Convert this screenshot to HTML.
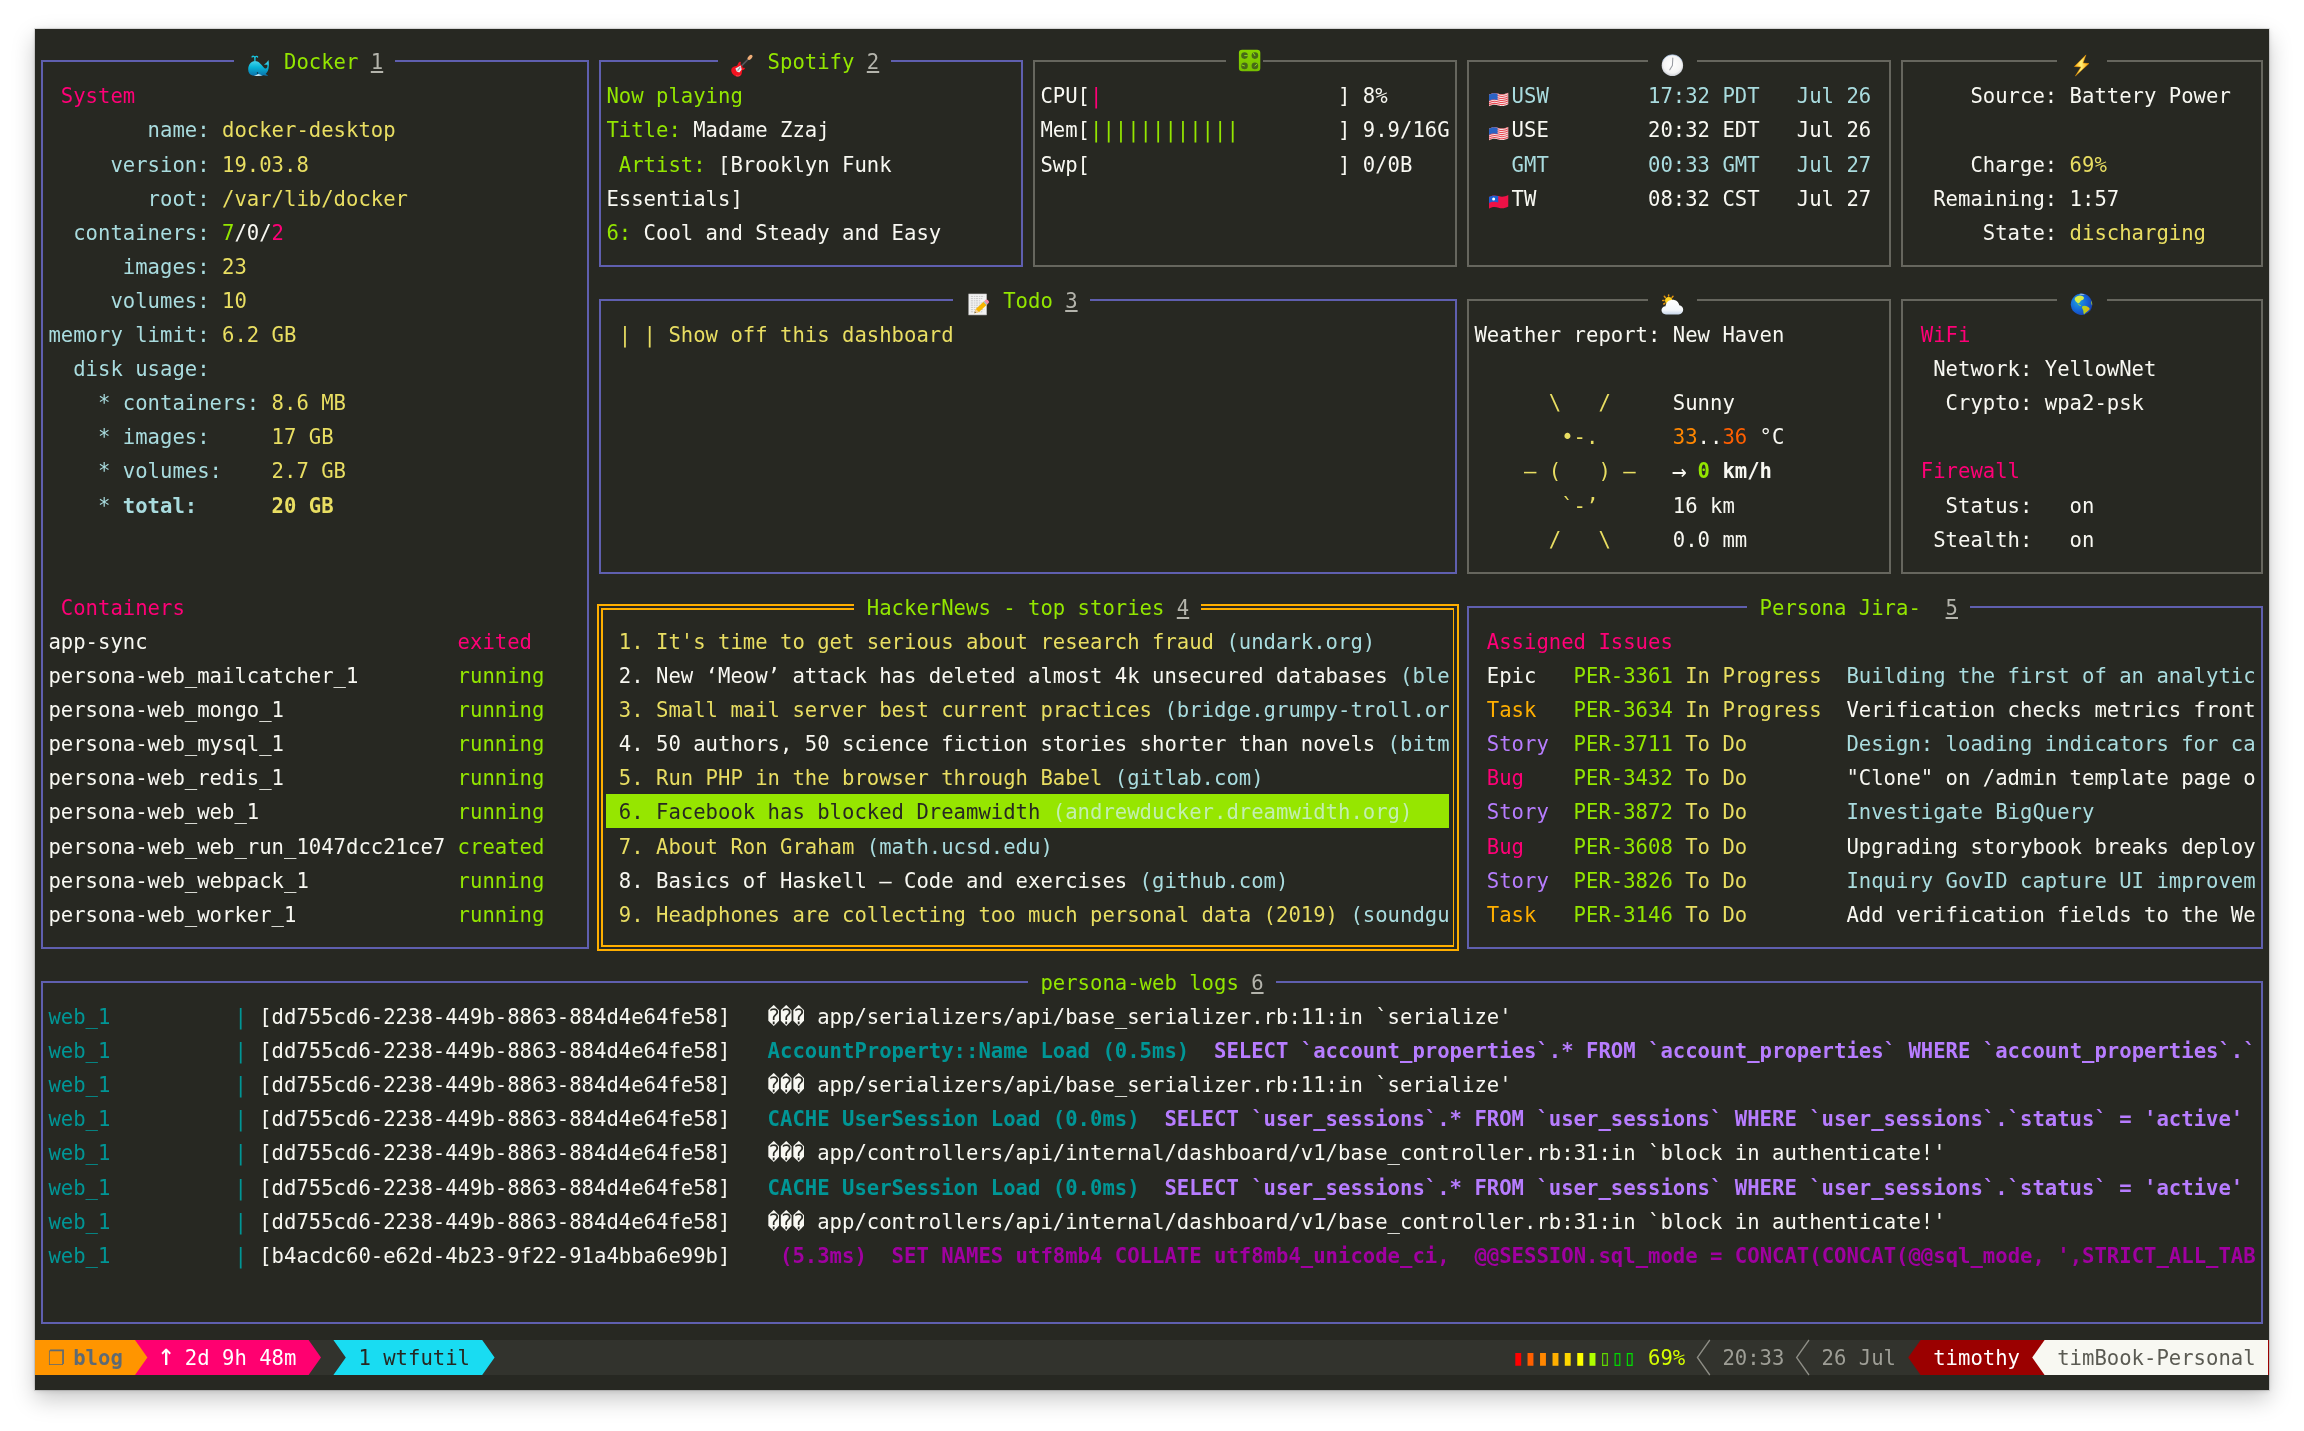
<!DOCTYPE html>
<html lang="en"><head><meta charset="utf-8"><title>wtfutil dashboard</title>
<style>
html,body{margin:0;padding:0;background:#fff;}
body{width:2304px;height:1431px;overflow:hidden;position:relative;}
#term{position:absolute;left:35px;top:29px;width:2234px;height:1361px;background:#272822;
 box-shadow:0 0 0 1px rgba(0,0,0,.10),0 9px 22px rgba(0,0,0,.22),0 1px 5px rgba(0,0,0,.12);}
#scr{position:absolute;left:0;top:0;width:2304px;height:1431px;will-change:transform;}
.b{position:absolute;}
.r{position:absolute;left:35.8px;height:34.1px;line-height:34.1px;white-space:pre;
 font-family:"DejaVu Sans Mono","Liberation Mono",monospace;font-size:21.5px;color:#f8f8f2;
 transform:scaleX(0.958);transform-origin:0 0;width:2329.85px;}
.r span{position:absolute;top:0;}
</style></head>
<body>
<div id="term"></div>
<div id="scr">
<div class="b" style="left:41.00px;top:60.25px;width:193.20px;height:2.00px;background:#5f5faf;"></div>
<div class="b" style="left:395.40px;top:60.25px;width:193.20px;height:2.00px;background:#5f5faf;"></div>
<div class="b" style="left:41.00px;top:946.85px;width:547.60px;height:2.00px;background:#5f5faf;"></div>
<div class="b" style="left:41.00px;top:60.25px;width:2.00px;height:888.60px;background:#5f5faf;"></div>
<div class="b" style="left:586.60px;top:60.25px;width:2.00px;height:888.60px;background:#5f5faf;"></div>
<div class="b" style="left:599.00px;top:60.25px;width:118.80px;height:2.00px;background:#5f5faf;"></div>
<div class="b" style="left:891.40px;top:60.25px;width:131.20px;height:2.00px;background:#5f5faf;"></div>
<div class="b" style="left:599.00px;top:264.85px;width:423.60px;height:2.00px;background:#5f5faf;"></div>
<div class="b" style="left:599.00px;top:60.25px;width:2.00px;height:206.60px;background:#5f5faf;"></div>
<div class="b" style="left:1020.60px;top:60.25px;width:2.00px;height:206.60px;background:#5f5faf;"></div>
<div class="b" style="left:1033.00px;top:60.25px;width:193.20px;height:2.00px;background:#66665e;"></div>
<div class="b" style="left:1263.40px;top:60.25px;width:193.20px;height:2.00px;background:#66665e;"></div>
<div class="b" style="left:1033.00px;top:264.85px;width:423.60px;height:2.00px;background:#66665e;"></div>
<div class="b" style="left:1033.00px;top:60.25px;width:2.00px;height:206.60px;background:#66665e;"></div>
<div class="b" style="left:1454.60px;top:60.25px;width:2.00px;height:206.60px;background:#66665e;"></div>
<div class="b" style="left:1467.00px;top:60.25px;width:180.80px;height:2.00px;background:#66665e;"></div>
<div class="b" style="left:1697.40px;top:60.25px;width:193.20px;height:2.00px;background:#66665e;"></div>
<div class="b" style="left:1467.00px;top:264.85px;width:423.60px;height:2.00px;background:#66665e;"></div>
<div class="b" style="left:1467.00px;top:60.25px;width:2.00px;height:206.60px;background:#66665e;"></div>
<div class="b" style="left:1888.60px;top:60.25px;width:2.00px;height:206.60px;background:#66665e;"></div>
<div class="b" style="left:1901.00px;top:60.25px;width:156.00px;height:2.00px;background:#66665e;"></div>
<div class="b" style="left:2106.60px;top:60.25px;width:156.00px;height:2.00px;background:#66665e;"></div>
<div class="b" style="left:1901.00px;top:264.85px;width:361.60px;height:2.00px;background:#66665e;"></div>
<div class="b" style="left:1901.00px;top:60.25px;width:2.00px;height:206.60px;background:#66665e;"></div>
<div class="b" style="left:2260.60px;top:60.25px;width:2.00px;height:206.60px;background:#66665e;"></div>
<div class="b" style="left:599.00px;top:298.95px;width:354.40px;height:2.00px;background:#5f5faf;"></div>
<div class="b" style="left:1089.80px;top:298.95px;width:366.80px;height:2.00px;background:#5f5faf;"></div>
<div class="b" style="left:599.00px;top:571.75px;width:857.60px;height:2.00px;background:#5f5faf;"></div>
<div class="b" style="left:599.00px;top:298.95px;width:2.00px;height:274.80px;background:#5f5faf;"></div>
<div class="b" style="left:1454.60px;top:298.95px;width:2.00px;height:274.80px;background:#5f5faf;"></div>
<div class="b" style="left:1467.00px;top:298.95px;width:180.80px;height:2.00px;background:#66665e;"></div>
<div class="b" style="left:1697.40px;top:298.95px;width:193.20px;height:2.00px;background:#66665e;"></div>
<div class="b" style="left:1467.00px;top:571.75px;width:423.60px;height:2.00px;background:#66665e;"></div>
<div class="b" style="left:1467.00px;top:298.95px;width:2.00px;height:274.80px;background:#66665e;"></div>
<div class="b" style="left:1888.60px;top:298.95px;width:2.00px;height:274.80px;background:#66665e;"></div>
<div class="b" style="left:1901.00px;top:298.95px;width:156.00px;height:2.00px;background:#66665e;"></div>
<div class="b" style="left:2106.60px;top:298.95px;width:156.00px;height:2.00px;background:#66665e;"></div>
<div class="b" style="left:1901.00px;top:571.75px;width:361.60px;height:2.00px;background:#66665e;"></div>
<div class="b" style="left:1901.00px;top:298.95px;width:2.00px;height:274.80px;background:#66665e;"></div>
<div class="b" style="left:2260.60px;top:298.95px;width:2.00px;height:274.80px;background:#66665e;"></div>
<div class="b" style="left:596.90px;top:603.75px;width:257.30px;height:1.90px;background:#ffaf00;"></div>
<div class="b" style="left:1201.40px;top:603.75px;width:257.30px;height:1.90px;background:#ffaf00;"></div>
<div class="b" style="left:596.90px;top:949.05px;width:861.80px;height:1.90px;background:#ffaf00;"></div>
<div class="b" style="left:596.90px;top:603.75px;width:1.90px;height:347.20px;background:#ffaf00;"></div>
<div class="b" style="left:1456.80px;top:603.75px;width:1.90px;height:347.20px;background:#ffaf00;"></div>
<div class="b" style="left:601.20px;top:608.05px;width:253.00px;height:1.90px;background:#ffaf00;"></div>
<div class="b" style="left:1201.40px;top:608.05px;width:253.00px;height:1.90px;background:#ffaf00;"></div>
<div class="b" style="left:601.20px;top:944.75px;width:853.20px;height:1.90px;background:#ffaf00;"></div>
<div class="b" style="left:601.20px;top:608.05px;width:1.90px;height:338.60px;background:#ffaf00;"></div>
<div class="b" style="left:1452.50px;top:608.05px;width:1.90px;height:338.60px;background:#ffaf00;"></div>
<div class="b" style="left:1467.00px;top:605.85px;width:280.00px;height:2.00px;background:#5f5faf;"></div>
<div class="b" style="left:1970.20px;top:605.85px;width:292.40px;height:2.00px;background:#5f5faf;"></div>
<div class="b" style="left:1467.00px;top:946.85px;width:795.60px;height:2.00px;background:#5f5faf;"></div>
<div class="b" style="left:1467.00px;top:605.85px;width:2.00px;height:343.00px;background:#5f5faf;"></div>
<div class="b" style="left:2260.60px;top:605.85px;width:2.00px;height:343.00px;background:#5f5faf;"></div>
<div class="b" style="left:41.00px;top:980.95px;width:986.80px;height:2.00px;background:#5f5faf;"></div>
<div class="b" style="left:1275.80px;top:980.95px;width:986.80px;height:2.00px;background:#5f5faf;"></div>
<div class="b" style="left:41.00px;top:1321.95px;width:2221.60px;height:2.00px;background:#5f5faf;"></div>
<div class="b" style="left:41.00px;top:980.95px;width:2.00px;height:343.00px;background:#5f5faf;"></div>
<div class="b" style="left:2260.60px;top:980.95px;width:2.00px;height:343.00px;background:#5f5faf;"></div>
<div class="b" style="left:606.20px;top:794.40px;width:843.20px;height:34.10px;background:#96e600;"></div>
<div class="b" style="left:35.00px;top:1340.00px;width:2234.00px;height:35.00px;background:#32332d;"></div>
<svg class="b" style="left:0;top:0" width="2304" height="1431" viewBox="0 0 2304 1431"><polygon points="35.00,1340.00 308.60,1340.00 321.00,1357.50 308.60,1375.00 35.00,1375.00" fill="#ff0070"/><polygon points="35.00,1340.00 135.00,1340.00 147.40,1357.50 135.00,1375.00 35.00,1375.00" fill="#ff9500"/><polygon points="333.40,1340.00 482.20,1340.00 494.60,1357.50 482.20,1375.00 333.40,1375.00 345.80,1357.50" fill="#19dcf2"/><polygon points="1908.20,1357.50 1920.60,1340.00 2269.00,1340.00 2269.00,1375.00 1920.60,1375.00" fill="#9b0000"/><polygon points="2032.20,1357.50 2044.60,1340.00 2268.00,1340.00 2268.00,1375.00 2044.60,1375.00" fill="#f8f8f2"/><polyline points="1709.80,1340.00 1697.40,1357.50 1709.80,1375.00" fill="none" stroke="#8e8e86" stroke-width="1.3"/><polyline points="1809.00,1340.00 1796.60,1357.50 1809.00,1375.00" fill="none" stroke="#8e8e86" stroke-width="1.3"/></svg>
<svg class="b" style="left:0;top:0" width="2304" height="1431" viewBox="0 0 2304 1431">
<defs>
<linearGradient id="wg" x1="0" y1="0" x2="0" y2="1"><stop offset="0" stop-color="#4fd8ee"/><stop offset="0.45" stop-color="#08b4d6"/><stop offset="1" stop-color="#0b6faa"/></linearGradient>
<radialGradient id="cg" cx="0.5" cy="0.45" r="0.55"><stop offset="0" stop-color="#ffffff"/><stop offset="0.75" stop-color="#f4f4f4"/><stop offset="1" stop-color="#c9cdd4"/></radialGradient>
<linearGradient id="lg" x1="0" y1="0" x2="1" y2="0"><stop offset="0" stop-color="#ffa000"/><stop offset="0.45" stop-color="#fff27a"/><stop offset="1" stop-color="#ff9d00"/></linearGradient>
<radialGradient id="gg" cx="0.35" cy="0.4" r="0.7"><stop offset="0" stop-color="#1f9fe0"/><stop offset="0.6" stop-color="#1462d6"/><stop offset="1" stop-color="#1b3fae"/></radialGradient>
<linearGradient id="cl" x1="0" y1="0" x2="0" y2="1"><stop offset="0" stop-color="#ffffff"/><stop offset="0.7" stop-color="#f4f7fb"/><stop offset="1" stop-color="#c8d6ea"/></linearGradient>
<linearGradient id="kg" x1="0" y1="0" x2="0" y2="1"><stop offset="0" stop-color="#86d400"/><stop offset="1" stop-color="#76c000"/></linearGradient>
</defs><g>
<path d="M248.2 69.5 C248.2 64.5 251 60.9 255 60.9 C258.5 60.9 261 63.8 263.8 67.6 C264.8 69 266.3 69 267.2 67.2 C267.6 66.2 267.4 65.3 267.2 64.8 L263.9 64.7 C265.5 63.6 267.5 62 268.3 60.0 C268.9 62 269 64 268.8 66 C268.8 69.5 267.5 72.5 265.6 74 C266.5 74.6 267.5 75 268.2 75.4 C266.5 75.9 264.8 75.7 263.6 75.2 C261 76.2 256 76.3 252.5 75.6 C249.8 75 248.2 72.8 248.2 69.5Z" fill="url(#wg)"/>
<path d="M254.0 75.7 C256.5 76.3 260 76.2 262.4 75.3 C260.6 74.9 259.0 74.3 258.2 74.0 C257.2 74.9 255.6 75.5 254.0 75.7Z" fill="#dff1f7" opacity="0.9"/>
<path d="M254.9 60.8 L254.9 57.6 M254.9 57.7 C254.4 56.2 252.8 55.9 252.1 56.9 M254.9 57.7 C255.6 56.2 257.2 56.0 257.6 57.0" stroke="#19c4de" fill="none" stroke-width="1.4" stroke-linecap="round"/>
<circle cx="257.5" cy="72.9" r="0.75" fill="#0b1f30"/>
</g><g>
<path d="M741.0 66.4 L748.4 59.0" stroke="#56565b" stroke-width="1.7" stroke-linecap="round"/>
<ellipse cx="750.0" cy="57.4" rx="3.0" ry="1.75" transform="rotate(-45 750.0 57.4)" fill="#f0ae78"/>
<path d="M740.3 61.7 C741.2 62.2 741.0 63.2 740.3 63.9 L741.6 65.6 C742.6 66.8 743.0 67.6 742.6 68.1 C743.4 67.7 744.4 67.7 745.0 68.3 C744.6 69.6 743.4 70.2 742.2 70.2 C741.8 72.0 742.2 74.0 740.6 75.6 C739.0 77.0 736.0 76.8 734.0 75.2 C731.6 73.4 730.6 70.4 731.6 68.4 C732.4 66.8 734.6 66.2 736.4 66.0 C737.6 65.4 737.8 64.2 738.4 63.0 C738.9 62.2 739.6 61.6 740.3 61.7Z" fill="#f3121f"/>
<path d="M735.4 68.6 L740.7 65.4 L741.7 69.4 L739.3 72.4 L736.7 71.4Z" fill="#e4ecee"/>
<path d="M737.6 70.6 L740.2 67.4" stroke="#8d9599" stroke-width="1.2"/>
<path d="M736.0 75.6 C737.6 76.4 739.4 76.0 740.4 75.0" stroke="#ff6a70" stroke-width="0.9" fill="none" opacity="0.7"/>
</g><g transform="translate(1238.9,49.7)">
<rect x="0" y="0" width="21.4" height="21.5" rx="3.2" fill="url(#kg)"/>
<circle cx="5.6" cy="5.9" r="3.3" fill="#476a17"/><circle cx="16.0" cy="5.9" r="3.3" fill="#476a17"/>
<circle cx="5.6" cy="16.2" r="3.3" fill="#476a17"/><circle cx="16.0" cy="16.2" r="3.3" fill="#476a17"/>
<path d="M5.8 5.9 L8.4 5.9 M16 5.9 L14.6 3.6 M5.6 16.2 L3.2 15.4 M16 16.2 L18 14.6" stroke="#8fd820" stroke-width="1" stroke-linecap="round"/>
</g><g transform="translate(1672.4,65.4)">
<circle r="10.7" fill="url(#cg)"/>
<path d="M-9.6 -4.4 A10.6 10.6 0 0 1 9.6 -4.4" fill="none" stroke="#a9c3e6" stroke-width="0.9" opacity="0.8"/>
<path d="M0.4 -7.4 L0 0.1 L-2.6 4.4" fill="none" stroke="#9a9da3" stroke-width="1.1" stroke-linecap="round" stroke-linejoin="round"/>
</g><polygon points="2085.9,54.9 2074.4,66.5 2081.0,66.9 2075.4,76.0 2088.9,63.6 2083.0,63.1" fill="url(#lg)" stroke="#f39a00" stroke-width="0.5" stroke-linejoin="round"/><g transform="translate(968.8,294)"><rect x="0" y="0" width="17.7" height="20.9" fill="#f3f3f3" stroke="#c9c9c9" stroke-width="0.6"/><line x1="2" y1="2.4" x2="15.5" y2="2.4" stroke="#b5b5b5" stroke-width="0.7" stroke-dasharray="2.2 0.8 1.4 0.6"/><line x1="2" y1="4.6" x2="13.5" y2="4.6" stroke="#b5b5b5" stroke-width="0.7" stroke-dasharray="2.2 0.8 1.4 0.6"/><line x1="2" y1="6.8" x2="11.5" y2="6.8" stroke="#b5b5b5" stroke-width="0.7" stroke-dasharray="2.2 0.8 1.4 0.6"/><line x1="2" y1="9.0" x2="15.5" y2="9.0" stroke="#b5b5b5" stroke-width="0.7" stroke-dasharray="2.2 0.8 1.4 0.6"/><line x1="2" y1="11.2" x2="13.5" y2="11.2" stroke="#b5b5b5" stroke-width="0.7" stroke-dasharray="2.2 0.8 1.4 0.6"/><line x1="2" y1="13.4" x2="11.5" y2="13.4" stroke="#b5b5b5" stroke-width="0.7" stroke-dasharray="2.2 0.8 1.4 0.6"/><line x1="2" y1="15.6" x2="15.5" y2="15.6" stroke="#b5b5b5" stroke-width="0.7" stroke-dasharray="2.2 0.8 1.4 0.6"/><line x1="2" y1="17.8" x2="13.5" y2="17.8" stroke="#b5b5b5" stroke-width="0.7" stroke-dasharray="2.2 0.8 1.4 0.6"/><path d="M5.6 19.2 L7.0 15.0 L15.6 7.0 L18.6 10.2 L10.2 18.0Z" fill="#f7b500"/><path d="M5.6 19.2 L7.0 15.0 L10.2 18.0Z" fill="#f3cf9a"/><path d="M5.6 19.2 L6.1 17.6 L7.3 18.7Z" fill="#555"/><path d="M14.6 7.9 L15.6 7.0 L18.6 10.2 L17.6 11.1Z" fill="#9fc2e0"/><path d="M15.6 7.0 L16.9 5.8 C17.6 5.2 18.4 5.4 19.0 6.0 L19.8 6.9 C20.3 7.5 20.4 8.4 19.8 9.0 L18.6 10.2Z" fill="#f78da7"/></g><g>
<g stroke="#e8960c" stroke-width="1.5" stroke-linecap="round">
<line x1="1668.6" y1="296.1" x2="1668.6" y2="294.9"/><line x1="1665.3" y1="297.4" x2="1664.3" y2="296.3"/>
<line x1="1672.0" y1="297.4" x2="1673.0" y2="296.3"/><line x1="1664.0" y1="300.6" x2="1662.7" y2="300.4"/>
<line x1="1664.8" y1="303.4" x2="1663.8" y2="304.0"/></g>
<circle cx="1668.7" cy="300.6" r="3.6" fill="#ffd321"/>
<path d="M1666.0 314.4 C1663.3 314.4 1661.5 312.6 1661.5 310.3 C1661.5 308.1 1663.2 306.4 1665.5 306.3 C1666.0 302.6 1668.8 299.8 1672.6 299.8 C1676.0 299.8 1678.6 302.0 1679.3 305.3 C1681.6 305.6 1683.2 307.5 1683.2 309.8 C1683.2 312.4 1681.2 314.4 1678.6 314.4Z" fill="url(#cl)"/>
</g><g transform="translate(2081.5,304.2)">
<circle r="10.7" fill="url(#gg)"/>
<path d="M-6.6 -6.2 C-5 -8.4 -1.6 -9.4 0.8 -8.2 C2.6 -7.4 3 -6 1.8 -4.8 C0.6 -4 -0.6 -4 -1.2 -2.8 C-1.8 -1.6 -2.8 -0.8 -3.8 -1.2 C-5.4 -2 -6.2 -3.6 -6.8 -4.8Z" fill="#d8ee4a"/>
<path d="M-3.6 -1.2 C-2.8 -0.2 -1.6 0.8 -0.2 1.2 L-0.8 1.9 C-2.2 1.4 -3.4 0.2 -4 -0.8Z" fill="#9fd63a"/>
<path d="M0.6 2.4 C2.2 1 4.6 1.6 6.6 2.8 C8.2 3.6 8.6 4.6 7.4 5.8 C5.6 7.4 3.8 8.8 2.6 10.2 C1.6 9.2 2.2 7.4 1.6 6 C1.2 4.8 0 3.6 0.6 2.4Z" fill="#b6cf1e"/>
<path d="M4.6 3.0 C6.2 3.2 7.6 4 7.9 5 C6.4 6.4 5.2 7 4.2 8.2 C4.6 6.4 5 4.8 4.6 3.0Z" fill="#e0b312"/>
<path d="M-2.4 -10.0 C-0.8 -10.6 1.6 -10.6 3.4 -9.8 C2 -9.2 0 -9.2 -2.4 -10.0Z" fill="#cfe6f2" opacity="0.8"/>
<path d="M9.9 -3.4 C10.6 -2 10.8 -0.4 10.6 1.2 C9.8 0.2 9.4 -1.8 9.9 -3.4Z" fill="#a8c62a"/>
</g><g transform="translate(1488.8,92.6)"><clipPath id="fc92"><path d="M0 2.2 C3 0.2 6.4 0.2 9.8 1.2 C13 2.2 16.4 1.8 19.6 0 L19.6 11.6 C16.4 13.4 13 13.8 9.8 12.8 C6.4 11.8 3 11.8 0 13.8Z"/></clipPath><g clip-path="url(#fc92)"><rect x="0" y="-1" width="20" height="16" fill="#f6e6e6"/><path d="M0 2.20 C3 0.20 6.4 0.20 9.8 1.20 C13 2.20 16.4 1.80 19.6 0.00" stroke="#ea4b55" stroke-width="1.05" fill="none"/><path d="M0 4.25 C3 2.25 6.4 2.25 9.8 3.25 C13 4.25 16.4 3.85 19.6 2.05" stroke="#ea4b55" stroke-width="1.05" fill="none"/><path d="M0 6.30 C3 4.30 6.4 4.30 9.8 5.30 C13 6.30 16.4 5.90 19.6 4.10" stroke="#ea4b55" stroke-width="1.05" fill="none"/><path d="M0 8.35 C3 6.35 6.4 6.35 9.8 7.35 C13 8.35 16.4 7.95 19.6 6.15" stroke="#ea4b55" stroke-width="1.05" fill="none"/><path d="M0 10.40 C3 8.40 6.4 8.40 9.8 9.40 C13 10.40 16.4 10.00 19.6 8.20" stroke="#ea4b55" stroke-width="1.05" fill="none"/><path d="M0 12.45 C3 10.45 6.4 10.45 9.8 11.45 C13 12.45 16.4 12.05 19.6 10.25" stroke="#ea4b55" stroke-width="1.05" fill="none"/><path d="M0 14.50 C3 12.50 6.4 12.50 9.8 13.50 C13 14.50 16.4 14.10 19.6 12.30" stroke="#ea4b55" stroke-width="1.05" fill="none"/><path d="M0 1.6 C3 -0.2 6 0 8.8 0.8 L8.8 7.4 C6 6.6 3 6.6 0 8.4Z" fill="#2a63c4"/></g></g><g transform="translate(1488.8,126.69999999999999)"><clipPath id="fc126"><path d="M0 2.2 C3 0.2 6.4 0.2 9.8 1.2 C13 2.2 16.4 1.8 19.6 0 L19.6 11.6 C16.4 13.4 13 13.8 9.8 12.8 C6.4 11.8 3 11.8 0 13.8Z"/></clipPath><g clip-path="url(#fc126)"><rect x="0" y="-1" width="20" height="16" fill="#f6e6e6"/><path d="M0 2.20 C3 0.20 6.4 0.20 9.8 1.20 C13 2.20 16.4 1.80 19.6 0.00" stroke="#ea4b55" stroke-width="1.05" fill="none"/><path d="M0 4.25 C3 2.25 6.4 2.25 9.8 3.25 C13 4.25 16.4 3.85 19.6 2.05" stroke="#ea4b55" stroke-width="1.05" fill="none"/><path d="M0 6.30 C3 4.30 6.4 4.30 9.8 5.30 C13 6.30 16.4 5.90 19.6 4.10" stroke="#ea4b55" stroke-width="1.05" fill="none"/><path d="M0 8.35 C3 6.35 6.4 6.35 9.8 7.35 C13 8.35 16.4 7.95 19.6 6.15" stroke="#ea4b55" stroke-width="1.05" fill="none"/><path d="M0 10.40 C3 8.40 6.4 8.40 9.8 9.40 C13 10.40 16.4 10.00 19.6 8.20" stroke="#ea4b55" stroke-width="1.05" fill="none"/><path d="M0 12.45 C3 10.45 6.4 10.45 9.8 11.45 C13 12.45 16.4 12.05 19.6 10.25" stroke="#ea4b55" stroke-width="1.05" fill="none"/><path d="M0 14.50 C3 12.50 6.4 12.50 9.8 13.50 C13 14.50 16.4 14.10 19.6 12.30" stroke="#ea4b55" stroke-width="1.05" fill="none"/><path d="M0 1.6 C3 -0.2 6 0 8.8 0.8 L8.8 7.4 C6 6.6 3 6.6 0 8.4Z" fill="#2a63c4"/></g></g><g transform="translate(1488.8,194.9)"><clipPath id="ft"><path d="M0 2.2 C3 0.2 6.4 0.2 9.8 1.2 C13 2.2 16.4 1.8 19.6 0 L19.6 11.6 C16.4 13.4 13 13.8 9.8 12.8 C6.4 11.8 3 11.8 0 13.8Z"/></clipPath><g clip-path="url(#ft)"><rect x="0" y="-1" width="20" height="16" fill="#ee1146"/><path d="M0 1.6 C3 -0.2 6 0 9.4 1.0 L9.4 7.6 C6 6.6 3 6.6 0 8.4Z" fill="#1c5fd0"/><circle cx="4.8" cy="4.2" r="1.5" fill="#fff"/></g></g></svg>
<div class="r" style="top:45.20px"><span style="left:258.873px;color:#93e600;">Docker</span><span style="left:349.478px;color:#b4b4ac;text-decoration:underline;text-decoration-thickness:1.6px;text-underline-offset:2px;">1</span><span style="left:763.674px;color:#93e600;">Spotify</span><span style="left:867.223px;color:#b4b4ac;text-decoration:underline;text-decoration-thickness:1.6px;text-underline-offset:2px;">2</span></div>
<div class="r" style="top:79.30px"><span style="left:25.887px;color:#ff0077;">System</span><span style="left:595.407px;color:#93e600;">Now playing</span><span style="left:1048.434px;color:#f8f8f2;">CPU[</span><span style="left:1100.209px;color:#ff0077;">|</span><span style="left:1359.081px;color:#f8f8f2;">] 8%</span><span style="left:1540.292px;color:#a9dcdf;">USW</span><span style="left:1682.672px;color:#a9dcdf;">17:32 PDT</span><span style="left:1837.996px;color:#a9dcdf;">Jul 26</span><span style="left:2019.207px;color:#f8f8f2;">Source:</span><span style="left:2122.756px;color:#f8f8f2;">Battery Power</span></div>
<div class="r" style="top:113.40px"><span style="left:116.493px;color:#a9dcdf;">name:</span><span style="left:194.154px;color:#e9de62;">docker-desktop</span><span style="left:595.407px;color:#93e600;">Title: </span><span style="left:686.013px;color:#f8f8f2;">Madame Zzaj</span><span style="left:1048.434px;color:#f8f8f2;">Mem[</span><span style="left:1100.209px;color:#93e600;">||||||||||||</span><span style="left:1359.081px;color:#f8f8f2;">] 9.9/16G</span><span style="left:1540.292px;color:#f8f8f2;">USE</span><span style="left:1682.672px;color:#f8f8f2;">20:32 EDT</span><span style="left:1837.996px;color:#f8f8f2;">Jul 26</span></div>
<div class="r" style="top:147.50px"><span style="left:77.662px;color:#a9dcdf;">version:</span><span style="left:194.154px;color:#e9de62;">19.03.8</span><span style="left:595.407px;color:#93e600;"> Artist: </span><span style="left:711.900px;color:#f8f8f2;">[Brooklyn Funk</span><span style="left:1048.434px;color:#f8f8f2;">Swp[</span><span style="left:1359.081px;color:#f8f8f2;">] 0/0B</span><span style="left:1540.292px;color:#a9dcdf;">GMT</span><span style="left:1682.672px;color:#a9dcdf;">00:33 GMT</span><span style="left:1837.996px;color:#a9dcdf;">Jul 27</span><span style="left:2019.207px;color:#f8f8f2;">Charge:</span><span style="left:2122.756px;color:#e9de62;">69%</span></div>
<div class="r" style="top:181.60px"><span style="left:116.493px;color:#a9dcdf;">root:</span><span style="left:194.154px;color:#e9de62;">/var/lib/docker</span><span style="left:595.407px;color:#f8f8f2;">Essentials]</span><span style="left:1540.292px;color:#f8f8f2;">TW</span><span style="left:1682.672px;color:#f8f8f2;">08:32 CST</span><span style="left:1837.996px;color:#f8f8f2;">Jul 27</span><span style="left:1980.376px;color:#f8f8f2;">Remaining:</span><span style="left:2122.756px;color:#f8f8f2;">1:57</span></div>
<div class="r" style="top:215.70px"><span style="left:38.831px;color:#a9dcdf;">containers:</span><span style="left:194.154px;color:#93e600;">7</span><span style="left:207.098px;color:#f8f8f2;">/0/</span><span style="left:245.929px;color:#ff0077;">2</span><span style="left:595.407px;color:#93e600;">6: </span><span style="left:634.238px;color:#f8f8f2;">Cool and Steady and Easy</span><span style="left:2032.150px;color:#f8f8f2;">State:</span><span style="left:2122.756px;color:#e9de62;">discharging</span></div>
<div class="r" style="top:249.80px"><span style="left:90.605px;color:#a9dcdf;">images:</span><span style="left:194.154px;color:#e9de62;">23</span></div>
<div class="r" style="top:283.90px"><span style="left:77.662px;color:#a9dcdf;">volumes:</span><span style="left:194.154px;color:#e9de62;">10</span><span style="left:1009.603px;color:#93e600;">Todo</span><span style="left:1074.322px;color:#b4b4ac;text-decoration:underline;text-decoration-thickness:1.6px;text-underline-offset:2px;">3</span></div>
<div class="r" style="top:318.00px"><span style="left:12.944px;color:#a9dcdf;">memory limit:</span><span style="left:194.154px;color:#e9de62;">6.2 GB</span><span style="left:608.351px;color:#e9de62;">| | Show off this dashboard</span><span style="left:1501.461px;color:#f8f8f2;">Weather report: New Haven</span><span style="left:1967.432px;color:#ff0077;">WiFi</span></div>
<div class="r" style="top:352.10px"><span style="left:38.831px;color:#a9dcdf;">disk usage:</span><span style="left:1980.376px;color:#f8f8f2;">Network: YellowNet</span></div>
<div class="r" style="top:386.20px"><span style="left:64.718px;color:#a9dcdf;">*</span><span style="left:90.605px;color:#a9dcdf;">containers:</span><span style="left:245.929px;color:#e9de62;">8.6 MB</span><span style="left:1579.123px;color:#e9de62;">\   /</span><span style="left:1708.559px;color:#f8f8f2;">Sunny</span><span style="left:1993.319px;color:#f8f8f2;">Crypto: wpa2-psk</span></div>
<div class="r" style="top:420.30px"><span style="left:64.718px;color:#a9dcdf;">*</span><span style="left:90.605px;color:#a9dcdf;">images:</span><span style="left:245.929px;color:#e9de62;">17 GB</span><span style="left:1592.067px;color:#e9de62;">•-.</span><span style="left:1708.559px;color:#ff8700;">33</span><span style="left:1734.447px;color:#f8f8f2;">..</span><span style="left:1760.334px;color:#ff5f00;">36</span><span style="left:1786.221px;color:#f8f8f2;"> °C</span></div>
<div class="r" style="top:454.40px"><span style="left:64.718px;color:#a9dcdf;">*</span><span style="left:90.605px;color:#a9dcdf;">volumes:</span><span style="left:245.929px;color:#e9de62;">2.7 GB</span><span style="left:1553.236px;color:#e9de62;">― (   ) ―</span><span style="left:1707.516px;color:#f8f8f2;font-size:25.80px;">→</span><span style="left:1734.447px;color:#93e600;font-weight:bold;">0</span><span style="left:1747.390px;color:#f8f8f2;font-weight:bold;"> km/h</span><span style="left:1967.432px;color:#ff0077;">Firewall</span></div>
<div class="r" style="top:488.50px"><span style="left:64.718px;color:#a9dcdf;">*</span><span style="left:90.605px;color:#a9dcdf;font-weight:bold;">total:</span><span style="left:245.929px;color:#e9de62;font-weight:bold;">20 GB</span><span style="left:1592.067px;color:#e9de62;">`-’</span><span style="left:1708.559px;color:#f8f8f2;">16 km</span><span style="left:1993.319px;color:#f8f8f2;">Status:   on</span></div>
<div class="r" style="top:522.60px"><span style="left:1579.123px;color:#e9de62;">/   \</span><span style="left:1708.559px;color:#f8f8f2;">0.0 mm</span><span style="left:1980.376px;color:#f8f8f2;">Stealth:   on</span></div>
<div class="r" style="top:590.80px"><span style="left:25.887px;color:#ff0077;">Containers</span><span style="left:867.223px;color:#93e600;">HackerNews - top stories</span><span style="left:1190.814px;color:#b4b4ac;text-decoration:underline;text-decoration-thickness:1.6px;text-underline-offset:2px;">4</span><span style="left:1799.165px;color:#93e600;">Persona Jira-</span><span style="left:1993.319px;color:#b4b4ac;text-decoration:underline;text-decoration-thickness:1.6px;text-underline-offset:2px;">5</span></div>
<div class="r" style="top:624.90px"><span style="left:12.944px;color:#f8f8f2;">app-sync</span><span style="left:440.084px;color:#ff0077;">exited</span><span style="left:608.351px;color:#e9de62;">1. It's time to get serious about research fraud </span><span style="left:1242.589px;color:#a9dcdf;">(undark.org)</span><span style="left:1514.405px;color:#ff0077;">Assigned Issues</span></div>
<div class="r" style="top:659.00px"><span style="left:12.944px;color:#f8f8f2;">persona-web_mailcatcher_1</span><span style="left:440.084px;color:#93e600;">running</span><span style="left:608.351px;color:#f8f8f2;">2. New ‘Meow’ attack has deleted almost 4k unsecured databases </span><span style="left:1423.800px;color:#a9dcdf;">(ble</span><span style="left:1514.405px;color:#f8f8f2;">Epic</span><span style="left:1605.010px;color:#93e600;">PER-3361</span><span style="left:1721.503px;color:#e9de62;">In Progress</span><span style="left:1889.770px;color:#a9dcdf;">Building the first of an analytic</span></div>
<div class="r" style="top:693.10px"><span style="left:12.944px;color:#f8f8f2;">persona-web_mongo_1</span><span style="left:440.084px;color:#93e600;">running</span><span style="left:608.351px;color:#e9de62;">3. Small mail server best current practices </span><span style="left:1177.871px;color:#a9dcdf;">(bridge.grumpy-troll.or</span><span style="left:1514.405px;color:#ffaf00;">Task</span><span style="left:1605.010px;color:#93e600;">PER-3634</span><span style="left:1721.503px;color:#e9de62;">In Progress</span><span style="left:1889.770px;color:#f8f8f2;">Verification checks metrics front</span></div>
<div class="r" style="top:727.20px"><span style="left:12.944px;color:#f8f8f2;">persona-web_mysql_1</span><span style="left:440.084px;color:#93e600;">running</span><span style="left:608.351px;color:#f8f8f2;">4. 50 authors, 50 science fiction stories shorter than novels </span><span style="left:1410.856px;color:#a9dcdf;">(bitm</span><span style="left:1514.405px;color:#b77dff;">Story</span><span style="left:1605.010px;color:#93e600;">PER-3711</span><span style="left:1721.503px;color:#e9de62;">To Do</span><span style="left:1889.770px;color:#a9dcdf;">Design: loading indicators for ca</span></div>
<div class="r" style="top:761.30px"><span style="left:12.944px;color:#f8f8f2;">persona-web_redis_1</span><span style="left:440.084px;color:#93e600;">running</span><span style="left:608.351px;color:#e9de62;">5. Run PHP in the browser through Babel </span><span style="left:1126.096px;color:#a9dcdf;">(gitlab.com)</span><span style="left:1514.405px;color:#ff0077;">Bug</span><span style="left:1605.010px;color:#93e600;">PER-3432</span><span style="left:1721.503px;color:#e9de62;">To Do</span><span style="left:1889.770px;color:#f8f8f2;">"Clone" on /admin template page o</span></div>
<div class="r" style="top:795.40px"><span style="left:12.944px;color:#f8f8f2;">persona-web_web_1</span><span style="left:440.084px;color:#93e600;">running</span><span style="left:608.351px;color:#272822;">6. Facebook has blocked Dreamwidth </span><span style="left:1061.378px;color:#c3efb0;">(andrewducker.dreamwidth.org)</span><span style="left:1514.405px;color:#b77dff;">Story</span><span style="left:1605.010px;color:#93e600;">PER-3872</span><span style="left:1721.503px;color:#e9de62;">To Do</span><span style="left:1889.770px;color:#a9dcdf;">Investigate BigQuery</span></div>
<div class="r" style="top:829.50px"><span style="left:12.944px;color:#f8f8f2;">persona-web_web_run_1047dcc21ce7</span><span style="left:440.084px;color:#93e600;">created</span><span style="left:608.351px;color:#e9de62;">7. About Ron Graham </span><span style="left:867.223px;color:#a9dcdf;">(math.ucsd.edu)</span><span style="left:1514.405px;color:#ff0077;">Bug</span><span style="left:1605.010px;color:#93e600;">PER-3608</span><span style="left:1721.503px;color:#e9de62;">To Do</span><span style="left:1889.770px;color:#f8f8f2;">Upgrading storybook breaks deploy</span></div>
<div class="r" style="top:863.60px"><span style="left:12.944px;color:#f8f8f2;">persona-web_webpack_1</span><span style="left:440.084px;color:#93e600;">running</span><span style="left:608.351px;color:#f8f8f2;">8. Basics of Haskell – Code and exercises </span><span style="left:1151.983px;color:#a9dcdf;">(github.com)</span><span style="left:1514.405px;color:#b77dff;">Story</span><span style="left:1605.010px;color:#93e600;">PER-3826</span><span style="left:1721.503px;color:#e9de62;">To Do</span><span style="left:1889.770px;color:#a9dcdf;">Inquiry GovID capture UI improvem</span></div>
<div class="r" style="top:897.70px"><span style="left:12.944px;color:#f8f8f2;">persona-web_worker_1</span><span style="left:440.084px;color:#93e600;">running</span><span style="left:608.351px;color:#e9de62;">9. Headphones are collecting too much personal data (2019) </span><span style="left:1372.025px;color:#a9dcdf;">(soundgu</span><span style="left:1514.405px;color:#ffaf00;">Task</span><span style="left:1605.010px;color:#93e600;">PER-3146</span><span style="left:1721.503px;color:#e9de62;">To Do</span><span style="left:1889.770px;color:#f8f8f2;">Add verification fields to the We</span></div>
<div class="r" style="top:965.90px"><span style="left:1048.434px;color:#93e600;">persona-web logs</span><span style="left:1268.476px;color:#b4b4ac;text-decoration:underline;text-decoration-thickness:1.6px;text-underline-offset:2px;">6</span></div>
<div class="r" style="top:1000.00px"><span style="left:12.944px;color:#009696;">web_1</span><span style="left:207.098px;color:#009696;">|</span><span style="left:232.985px;color:#f8f8f2;">[dd755cd6-2238-449b-8863-884d4e64fe58]</span><span style="left:763.674px;color:#f8f8f2;">��� app/serializers/api/base_serializer.rb:11:in `serialize'</span></div>
<div class="r" style="top:1034.10px"><span style="left:12.944px;color:#009696;">web_1</span><span style="left:207.098px;color:#009696;">|</span><span style="left:232.985px;color:#f8f8f2;">[dd755cd6-2238-449b-8863-884d4e64fe58]</span><span style="left:763.674px;color:#009696;font-weight:bold;">AccountProperty::Name Load (0.5ms)</span><span style="left:1203.758px;color:#f8f8f2;">  </span><span style="left:1229.645px;color:#b77dff;font-weight:bold;">SELECT `account_properties`.* FROM `account_properties` WHERE `account_properties`.`</span></div>
<div class="r" style="top:1068.20px"><span style="left:12.944px;color:#009696;">web_1</span><span style="left:207.098px;color:#009696;">|</span><span style="left:232.985px;color:#f8f8f2;">[dd755cd6-2238-449b-8863-884d4e64fe58]</span><span style="left:763.674px;color:#f8f8f2;">��� app/serializers/api/base_serializer.rb:11:in `serialize'</span></div>
<div class="r" style="top:1102.30px"><span style="left:12.944px;color:#009696;">web_1</span><span style="left:207.098px;color:#009696;">|</span><span style="left:232.985px;color:#f8f8f2;">[dd755cd6-2238-449b-8863-884d4e64fe58]</span><span style="left:763.674px;color:#009696;font-weight:bold;">CACHE UserSession Load (0.0ms)</span><span style="left:1151.983px;color:#f8f8f2;">  </span><span style="left:1177.871px;color:#b77dff;font-weight:bold;">SELECT `user_sessions`.* FROM `user_sessions` WHERE `user_sessions`.`status` = 'active'</span></div>
<div class="r" style="top:1136.40px"><span style="left:12.944px;color:#009696;">web_1</span><span style="left:207.098px;color:#009696;">|</span><span style="left:232.985px;color:#f8f8f2;">[dd755cd6-2238-449b-8863-884d4e64fe58]</span><span style="left:763.674px;color:#f8f8f2;">��� app/controllers/api/internal/dashboard/v1/base_controller.rb:31:in `block in authenticate!'</span></div>
<div class="r" style="top:1170.50px"><span style="left:12.944px;color:#009696;">web_1</span><span style="left:207.098px;color:#009696;">|</span><span style="left:232.985px;color:#f8f8f2;">[dd755cd6-2238-449b-8863-884d4e64fe58]</span><span style="left:763.674px;color:#009696;font-weight:bold;">CACHE UserSession Load (0.0ms)</span><span style="left:1151.983px;color:#f8f8f2;">  </span><span style="left:1177.871px;color:#b77dff;font-weight:bold;">SELECT `user_sessions`.* FROM `user_sessions` WHERE `user_sessions`.`status` = 'active'</span></div>
<div class="r" style="top:1204.60px"><span style="left:12.944px;color:#009696;">web_1</span><span style="left:207.098px;color:#009696;">|</span><span style="left:232.985px;color:#f8f8f2;">[dd755cd6-2238-449b-8863-884d4e64fe58]</span><span style="left:763.674px;color:#f8f8f2;">��� app/controllers/api/internal/dashboard/v1/base_controller.rb:31:in `block in authenticate!'</span></div>
<div class="r" style="top:1238.70px"><span style="left:12.944px;color:#009696;">web_1</span><span style="left:207.098px;color:#009696;">|</span><span style="left:232.985px;color:#f8f8f2;">[b4acdc60-e62d-4b23-9f22-91a4bba6e99b]</span><span style="left:763.674px;color:#a000a0;font-weight:bold;"> (5.3ms)  SET NAMES utf8mb4 COLLATE utf8mb4_unicode_ci,  @@SESSION.sql_mode = CONCAT(CONCAT(@@sql_mode, ',STRICT_ALL_TAB</span></div>
<div class="r" style="top:1341.00px"><span style="left:12.526px;color:#5d6a74;font-size:28.38px;top:-2.00px;">❐</span><span style="left:38.831px;color:#5d6a74;font-weight:bold;">blog</span><span style="left:126.931px;color:#ffffff;font-size:30.10px;top:-3.00px;">↑</span><span style="left:155.324px;color:#ffffff;">2d 9h 48m</span><span style="left:336.534px;color:#272822;">1 wtfutil</span><span style="left:1540.919px;color:#ff0000;">▮</span><span style="left:1553.862px;color:#ff5f00;">▮</span><span style="left:1566.806px;color:#ff8700;">▮</span><span style="left:1579.749px;color:#ffaf00;">▮</span><span style="left:1592.693px;color:#ffd700;">▮</span><span style="left:1605.637px;color:#ffff00;">▮</span><span style="left:1618.580px;color:#afff00;">▮</span><span style="left:1631.524px;color:#5fd700;">▯</span><span style="left:1644.468px;color:#00d700;">▯</span><span style="left:1657.411px;color:#00e000;">▯</span><span style="left:1682.672px;color:#d7ff00;">69%</span><span style="left:1760.334px;color:#9e9e96;">20:33</span><span style="left:1863.883px;color:#9e9e96;">26 Jul</span><span style="left:1980.376px;color:#ffffff;">timothy</span><span style="left:2109.812px;color:#5b5b53;">timBook-Personal</span></div>
</div>
</body></html>
